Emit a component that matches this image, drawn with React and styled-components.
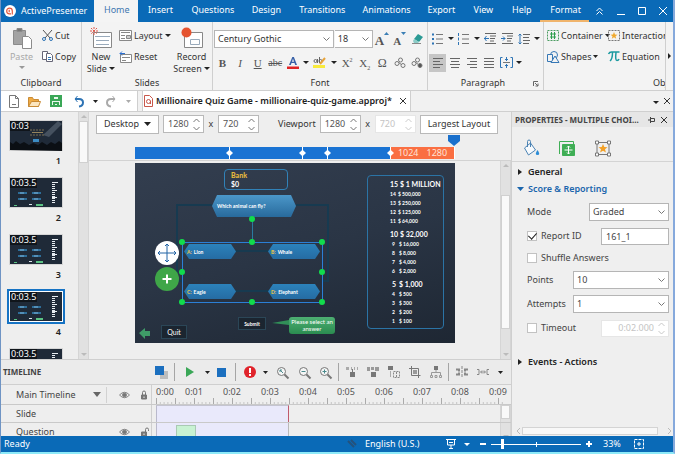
import React, {useState} from 'react';
import styled, {createGlobalStyle, css} from 'styled-components';

const BLUE = '#0a6ab7';
const LINE = '#cfcfcf';

const GlobalStyle = createGlobalStyle`
    *{
        box-sizing: border-box;
    }
    body{
        margin: 0;
        background: #eeeeee;
        color: #333;
        font-family: "Noto Sans", "Open Sans", sans-serif;
        font-size: 9px;
        line-height: 12px;
    }
    button, input, select{
        font: inherit;
        color: inherit;
        margin: 0;
        padding: 0;
        border: 0;
        background: none;
        border-radius: 0;
        min-width: 0;
    }
    ul, ol{
        list-style: none;
        margin: 0;
        padding: 0;
    }
`;

const Window = styled.div`
    display: flex;
    flex-direction: column;
    height: 100vh;
    overflow: hidden;
    background: #eeeeee;
    border-left: 1px solid #6f94c4;
    border-right: 2px solid #86a9dc;
    border-bottom: 2px solid #8eeaf8;
`;

/* title bar */
const TitleBar = styled.header`
    display: flex;
    flex: none;
    height: 22px;
    background: ${BLUE};
    color: #fff;
`;

const Brand = styled.div`
    display: flex;
    align-items: center;
    gap: 5px;
    width: 93px;
    padding-left: 3px;
    white-space: nowrap;
`;

const TabList = styled.nav`
    display: flex;
    flex: 1;
    min-width: 0;
`;

const RibbonTab = styled.button`
    padding: 0 10px;
    white-space: nowrap;
    border-bottom: 2px solid transparent;
    ${p => p.$active && css`
        background: #f4f4f4;
        color: #3f77b0;
    `}
    ${p => p.$context && css`
        border-bottom-color: #f0b46c;
    `}
`;

const WindowButtons = styled.div`
    display: flex;
    flex: none;
    align-items: center;
    button{
        width: 21px;
        height: 22px;
        display: grid;
        place-items: center;
    }
`;

/* ribbon */
const Ribbon = styled.div`
    display: flex;
    flex: none;
    height: 69px;
    background: #f3f3f3;
    border-bottom: 1px solid ${LINE};
`;

const Group = styled.section`
    display: flex;
    flex-direction: column;
    flex: ${p => p.$width ? 'none' : '1'};
    width: ${p => p.$width ? p.$width + 'px' : 'auto'};
    min-width: 0;
    overflow: hidden;
    padding: 3px 1px 0;
    border-right: 1px solid ${LINE};
`;

const GroupBody = styled.div`
    display: flex;
    flex: 1;
    gap: ${p => p.$gap || 0}px;
    padding-left: ${p => p.$pad || 0}px;
`;

const GroupLabel = styled.div`
    display: flex;
    align-items: center;
    height: 14px;
    padding: 0 4px 0 ${p => p.$pad || 4}px;
    white-space: nowrap;
    span{
        flex: 1;
        text-align: ${p => p.$pad ? 'left' : 'center'};
    }
`;

const BigButton = styled.button`
    display: flex;
    flex-direction: column;
    align-items: center;
    padding-top: 2px;
    width: ${p => p.$width}px;
    white-space: nowrap;
    &:disabled{
        color: #a9a9a9;
    }
    > svg:first-child{
        margin-bottom: 2px;
    }
    span svg{
        margin-bottom: 2px;
    }
`;

const Stack = styled.div`
    display: flex;
    flex-direction: column;
    min-width: 0;
`;

const SmallButton = styled.button`
    display: flex;
    align-items: center;
    gap: 2px;
    height: 21px;
    white-space: nowrap;
`;

const Tools = styled.div`
    display: flex;
    align-items: center;
    justify-content: space-between;
    height: 21px;
    margin-top: 3px;
    padding-right: ${p => p.$right || 0}px;
`;

const Tool = styled.button`
    display: grid;
    place-items: center;
    flex: none;
    width: ${p => p.$width || 17}px;
    height: 18px;
    background: ${p => p.$on ? '#c6c6c6' : 'none'};
    font-family: ${p => p.$serif ? '"Liberation Serif", serif' : 'inherit'};
    font-size: ${p => p.$size || 11}px;
    font-weight: ${p => p.$bold ? 700 : 400};
    font-style: ${p => p.$italic ? 'italic' : 'normal'};
    text-decoration: ${p => p.$deco || 'none'};
    color: #555;
    sup, sub{
        font-size: 6px;
        line-height: 0;
    }
`;

const Combo = styled.button`
    display: flex;
    align-items: center;
    justify-content: space-between;
    width: ${p => p.$width}px;
    height: 18px;
    padding: 0 3px;
    background: #fff;
    border: 1px solid #b5b5b5;
    & + &{
        border-left: 0;
    }
`;

const ScrollRibbon = styled.button`
    display: grid;
    place-items: center;
    flex: none;
    width: 7px;
`;

/* quick access + documents */
const DocBar = styled.div`
    display: flex;
    flex: none;
    align-items: stretch;
    height: 21px;
    border-bottom: 1px solid ${LINE};
    background: #f1f1f1;
`;

const QuickAccess = styled.div`
    display: flex;
    align-items: center;
    width: 137px;
    padding-left: 2px;
    background: #fff;
    border-right: 1px solid ${LINE};
`;

const DocTab = styled.div`
    display: flex;
    align-items: center;
    width: 269px;
    margin-left: 4px;
    padding: 0 4px 0 1px;
    gap: 3px;
    background: #fff;
    border: solid ${LINE};
    border-width: 0 1px;
    color: #222;
    font-weight: 600;
    white-space: nowrap;
    span{
        flex: 1;
    }
`;

const DocActions = styled.div`
    display: flex;
    align-items: center;
    gap: 5px;
    margin-left: auto;
    padding-right: 3px;
`;

/* workspace */
const Workspace = styled.div`
    display: grid;
    grid-template-columns: minmax(0, 1fr) 162px;
    flex: 1;
    min-height: 0;
`;

const Editor = styled.div`
    display: flex;
    flex-direction: column;
    min-width: 0;
    min-height: 0;
`;

const EditorTop = styled.div`
    display: flex;
    flex: 1;
    min-height: 0;
    border-bottom: 1px solid ${LINE};
`;

const SlideList = styled.ol`
    flex: none;
    width: 77px;
    overflow: hidden;
    padding: 6px 0 0 6px;
`;

const SlideItem = styled.li`
    width: 58px;
    height: 57px;
    text-align: right;
    color: #222;
    line-height: 16px;
    padding-right: 4px;
    font-weight: 600;
`;

const Thumb = styled.button`
    display: block;
    width: 58px;
    height: 35px;
    padding: 1px;
    border: 2px solid ${p => p.$selected ? '#1673c4' : 'transparent'};
    background: ${p => p.$selected ? '#fff' : '#d6d6d6'};
    background-clip: padding-box;
    position: relative;
    svg{
        display: block;
    }
`;

const Duration = styled.span`
    position: absolute;
    left: 1px;
    top: 1px;
    padding: 0 1px;
    color: #fff;
    background: #10151b;
    font-size: 9px;
    font-weight: 400;
    line-height: 10px;
`;

const VScroll = styled.div`
    display: flex;
    flex-direction: column;
    align-items: center;
    flex: none;
    width: 11px;
    border: solid #d5d5d5;
    border-width: 0 1px;
    background: #e1e1e1;
    color: #b9b9b9;
    i{
        display: block;
        width: 9px;
        height: ${p => p.$thumb};
        background: #f9f9f9;
        border: 1px solid #d0d0d0;
    }
`;

const ScrollArrow = styled.span`
    display: grid;
    place-items: center;
    width: 9px;
    height: ${p => p.$long ? 34 : 9}px;
    align-items: ${p => p.$long ? 'start' : 'center'};
    padding-top: ${p => p.$long ? 3 : 0}px;
    &:last-child{
        margin-top: auto;
    }
`;

const CanvasPane = styled.main`
    display: flex;
    flex-direction: column;
    flex: 1;
    min-width: 0;
`;

const CanvasBar = styled.div`
    display: flex;
    align-items: center;
    height: 24px;
    padding-left: 7px;
    gap: 4px;
    white-space: nowrap;
`;

const BoxButton = styled.button`
    display: flex;
    align-items: center;
    justify-content: space-between;
    width: ${p => p.$width}px;
    height: 19px;
    padding: 0 7px;
    background: #fff;
    border: 1px solid #b9b9b9;
`;

const Spin = styled.span`
    display: flex;
    align-items: center;
    width: ${p => p.$wide ? 68 : 41}px;
    height: ${p => p.$wide ? 17 : 18}px;
    padding: 0 3px 0 4px;
    background: #fff;
    border: 1px solid ${p => p.$off ? '#e6e6e6' : '#b9b9b9'};
    color: ${p => p.$off ? '#c4c4c4' : '#555'};
    input{
        flex: 1;
        width: 100%;
        text-align: ${p => p.$wide ? 'right' : 'left'};
    }
    svg{
        margin-left: 4px;
    }
`;

const Times = styled.span`
    width: 6px;
    text-align: center;
`;

const FieldLabel = styled.label`
    margin-left: 15px;
`;

const Breakpoints = styled.div`
    display: flex;
    align-items: flex-end;
    height: 25px;
    padding: 0 0 1px 46px;
    border-bottom: 1px solid #d2d2d2;
`;

const Segment = styled.div`
    display: flex;
    align-items: center;
    justify-content: center;
    gap: 8px;
    position: relative;
    width: ${p => p.$width}px;
    height: 12px;
    background: ${p => p.$orange ? '#fa6f42' : '#1a73d3'};
    border-right: 1px solid #fff;
    color: #ffe3d6;
`;

const SegmentHandle = styled.span`
    position: absolute;
    z-index: 1;
    right: -4px;
    top: 3px;
    width: 7px;
    height: 6px;
    background: #fff;
    clip-path: polygon(0 50%, 45% 0, 55% 0, 100% 50%, 55% 100%, 45% 100%);
`;

const Playhead = styled.span`
    position: absolute;
    right: -6px;
    top: -12px;
    width: 12px;
    height: 11px;
    background: #1a70cc;
    clip-path: polygon(0 0, 100% 0, 100% 55%, 50% 100%, 0 55%);
`;

const CanvasArea = styled.div`
    display: flex;
    flex: 1;
    min-height: 0;
    justify-content: space-between;
    padding-left: 46px;
`;

/* the slide */
const Stage = styled.div`
    position: relative;
    flex: none;
    width: 320px;
    height: 180px;
    margin-top: 2px;
    background: linear-gradient(165deg, #333e4f 0%, #2a3545 50%, #1e2733 100%);
    color: #fff;
    font-family: Lato, "Open Sans", sans-serif;
    font-size: 5px;
    line-height: 8px;
    white-space: nowrap;
`;

const Placed = styled.div`
    position: absolute;
    left: ${p => p.$x}px;
    top: ${p => p.$y}px;
    width: ${p => p.$w}px;
    height: ${p => p.$h}px;
`;

const Wires = styled.svg`
    position: absolute;
    inset: 0;
    overflow: visible;
`;

const BankBox = styled(Placed)`
    border: 1px solid #3182b8;
    border-radius: 4px;
    padding: 1px 6px;
    font-size: 7px;
    line-height: 9px;
    font-weight: 700;
    b{
        display: block;
        color: #e5b93c;
    }
`;

const Hexagon = styled(Placed)`
    display: flex;
    align-items: center;
    gap: 2px;
    padding-left: ${p => p.$question ? 5 : 3}px;
    background: ${p => p.$question ? 'linear-gradient(#4b97c9, #286a9c)' : 'linear-gradient(#2c82bb, #256ca3)'};
    clip-path: polygon(5px 0, calc(100% - 5px) 0, 100% 50%, calc(100% - 5px) 100%, 5px 100%, 0 50%);
    font-weight: 700;
    b{
        color: #e2c04d;
    }
`;

const SlideButton = styled(Placed)`
    display: grid;
    place-items: center;
    border: 1px solid #2b4657;
    background: #1b2530;
    font-size: ${p => p.$size}px;
    font-weight: ${p => p.$size > 5 ? 400 : 700};
`;

const Balloon = styled(Placed)`
    border-radius: 3px;
    background: linear-gradient(#4daf72, #2b8c50);
    font-size: 6px;
    line-height: 7px;
    padding-top: 1px;
    text-align: center;
`;

const Ladder = styled(Placed).attrs({as: 'ol'})`
    border: 1px solid #2b74a6;
    border-radius: 4px;
`;

const Rung = styled.li`
    display: flex;
    gap: 2px;
    padding-left: ${p => p.$indent ? 24 : 22}px;
    font-weight: 700;
    line-height: 9px;
    ${p => p.$big && css`
        font-size: 7px;
        line-height: 11px;
        padding-top: 3px;
    `}
    span{
        width: ${p => p.$indent ? 5 : p.$big ? 8 : 6}px;
        flex: none;
    }
`;

/* properties */
const Properties = styled.aside`
    display: flex;
    flex-direction: column;
    min-height: 0;
    border-left: 1px solid ${LINE};
    background: #efefef;
`;

const PanelTitle = styled.div`
    display: flex;
    align-items: center;
    height: 15px;
    padding: 0 6px 0 3px;
    gap: 6px;
    background: #e6e6e6;
    color: #444;
    font-size: 8px;
    font-weight: 700;
    white-space: nowrap;
    h2{
        flex: 1;
        margin: 0;
        font: inherit;
        overflow: hidden;
    }
`;

const PanelTabs = styled.div`
    display: flex;
    align-items: flex-end;
    height: 35px;
    padding: 0 0 2px 10px;
    gap: 18px;
    border-bottom: 1px solid #d4d4d4;
    button{
        width: 18px;
        height: 20px;
    }
`;

const Section = styled.button`
    display: flex;
    align-items: center;
    gap: ${p => p.$open ? 4 : 6}px;
    height: 17px;
    padding-left: ${p => p.$open ? 5 : 6}px;
    margin-top: ${p => p.$top || 0}px;
    font-weight: 600;
    color: ${p => p.$open ? '#1b66ad' : '#222'};
`;

const Fields = styled.div`
    display: flex;
    flex-direction: column;
    padding: 3px 4px 0 15px;
`;

const Field = styled.div`
    display: flex;
    align-items: center;
    height: ${p => p.$h || 24}px;
    color: #444;
    white-space: nowrap;
    > label{
        display: flex;
        align-items: center;
        gap: 4px;
        flex: 1;
    }
`;

const Check = styled.input.attrs({type: 'checkbox'})`
    appearance: none;
    display: grid;
    place-items: center;
    width: 10px;
    height: 10px;
    background: #fff;
    border: 1px solid #c2c2c2;
    &:checked::after{
        content: '';
        width: 4px;
        height: 7px;
        margin-top: -2px;
        border: solid #222;
        border-width: 0 1px 1px 0;
        transform: rotate(42deg);
    }
`;

const SelectWrap = styled.span`
    display: flex;
    align-items: center;
    width: ${p => p.$width}px;
    height: 18px;
    padding-right: 3px;
    background: #fff;
    border: 1px solid #b5b5b5;
    select{
        appearance: none;
        flex: 1;
        padding-left: 3px;
        outline: 0;
    }
`;

const TextInput = styled.input`
    width: 68px;
    height: 17px;
    padding-left: 4px;
    background: #fff;
    border: 1px solid #b5b5b5;
`;

const HScroll = styled.div`
    display: flex;
    align-items: center;
    gap: 2px;
    height: 10px;
    margin-top: auto;
    padding: 0 1px 0 4px;
    color: #bbb;
    i{
        flex: 1;
        height: 8px;
        margin-right: 8px;
        background: #f8f8f8;
        border: 1px solid #d4d4d4;
    }
`;

/* timeline */
const Timeline = styled.section`
    flex: none;
    height: 76px;
    overflow: hidden;
`;

const TimelineBar = styled.div`
    display: flex;
    align-items: center;
    height: 25px;
    padding: 0 1px 0 2px;
    border-bottom: 1px solid ${LINE};
    background: #ebebeb;
    h2{
        margin: 0;
        width: 147px;
        font-size: 8px;
        line-height: 12px;
        font-weight: 700;
        color: #444;
    }
`;

const Cell = styled.button`
    display: grid;
    place-items: center;
    flex: none;
    width: ${p => p.$w || 21}px;
    height: 20px;
`;

const Divider = styled.i`
    flex: none;
    width: 1px;
    height: 18px;
    margin: 0 ${p => p.$m ?? 2}px;
    background: #a5a5a5;
`;

const TrackRow = styled.div`
    display: grid;
    grid-template-columns: 151px minmax(0, 1fr) 11px;
    height: ${p => p.$h}px;
    border-bottom: 1px solid #c9c9c9;
`;

const TrackName = styled.div`
    display: flex;
    align-items: center;
    padding: 0 2px 0 15px;
    border-right: 1px solid ${LINE};
    color: #444;
    white-space: nowrap;
    span{
        flex: 1;
    }
`;

const TrackState = styled.div`
    display: flex;
    align-items: center;
    justify-content: space-between;
    width: ${p => p.$split ? 43 : 30}px;
    height: 16px;
    margin-left: 5px;
    padding-left: ${p => p.$split ? 12 : 0}px;
    border-left: ${p => p.$split ? 1 : 0}px solid #d2d2d2;
`;

const Ruler = styled.div`
    overflow: hidden;
    grid-column: 2 / 4;
    color: #555;
    ol{
        display: flex;
        padding-left: 4px;
        width: 400px;
    }
    li{
        flex: none;
        width: 38px;
        text-align: center;
        line-height: 13px;
    }
    li:first-child{
        width: 19px;
        text-align: left;
    }
    svg{
        display: block;
    }
`;

const Lane = styled.div`
    display: flex;
    padding-left: 4px;
`;

const Clip = styled.div`
    width: 133px;
    padding-left: ${p => p.$inset ? 19 : 0}px;
    background: #e9e9fb;
    border-left: 1px solid #b9b9cc;
    border-right: 1px solid ${p => p.$inset ? '#b9b9b9' : '#c05a6c'};
    border-top: ${p => p.$inset ? 0 : 1}px solid #c4c4d0;
    i{
        display: block;
        width: 20px;
        height: 100%;
        margin-top: 2px;
        background: #c8f2d3;
        border: 1px solid #a9c9b4;
    }
`;

/* status bar */
const StatusBar = styled.footer`
    display: flex;
    align-items: center;
    flex: none;
    height: 16px;
    padding: 0 26px 0 3px;
    background: ${BLUE};
    color: #fff;
    white-space: nowrap;
    button{
        display: grid;
        place-items: center;
        width: 16px;
        height: 16px;
    }
`;

const StatusText = styled.span`
    width: ${p => p.$width ? p.$width + 'px' : 'auto'};
    flex: ${p => p.$width ? 'none' : '1'};
    padding-left: ${p => p.$pad || 0}px;
`;

const Zoom = styled.input.attrs({type: 'range'})`
    appearance: none;
    width: 90px;
    height: 12px;
    background: linear-gradient(#fff, #fff) 45px 50% / 1px 5px no-repeat, linear-gradient(#fff, #fff) 0 50% / 100% 1px no-repeat;
    &::-webkit-slider-thumb{
        appearance: none;
        width: 3px;
        height: 10px;
        background: #fff;
    }
`;

const Svg = styled.svg`
    flex: none;
    overflow: visible;
`;

function Icon({w = 12, h = 12, stroke = '#5a6470', sw = 1, children}){
    return (
        <Svg width={w} height={h} viewBox={`0 0 ${w} ${h}`} fill="none" stroke={stroke} strokeWidth={sw} aria-hidden="true">
            {children}
        </Svg>
    )
}

function Caret({color = '#222', w = 6, h = 3, up}){
    return <Icon w={w} h={h} stroke="none"><path fill={color} d={up ? `M0 ${h}H${w}L${w / 2} 0z` : `M0 0H${w}L${w / 2} ${h}z`} /></Icon>
}

function Chevron(){
    return <Icon w={7} h={4} stroke="#777"><path d="M.5 .5l3 3 3-3" /></Icon>
}

function Arrows({color = '#777'}){
    return <Icon w={7} h={13} stroke={color}><path d="M.5 4l3-3 3 3M.5 9l3 3 3-3" /></Icon>
}

function Cross({size = 7, color = '#333'}){
    return <Icon w={size} h={size} stroke={color}><path d={`M0 0l${size} ${size}M${size} 0L0 ${size}`} /></Icon>
}

function Lines({short}){
    const paths = {
        left: 'M0 .5h10M0 3.5h7M0 6.5h10M0 9.5h7',
        center: 'M0 .5h10M1 3.5h8M0 6.5h10M1 9.5h8',
        right: 'M0 .5h10M3 3.5h7M0 6.5h10M3 9.5h7'
    };
    return <Icon w={10} h={10} stroke="#666"><path d={paths[short] || 'M0 .5h10M0 3.5h10M0 6.5h10M0 9.5h10'} /></Icon>
}

function Magnifier({sign}){
    return (
        <Icon w={13} h={13} stroke="#777">
            <circle cx="5.5" cy="5.5" r="4" fill="#f5f5f5" />
            <path d="M8.5 8.5l4 4" strokeWidth="2" />
            <path stroke="#498a8c" d={sign} />
        </Icon>
    )
}

function Eye(){
    return <Icon w={11} h={8} stroke="#888"><path d="M.5 4Q5.5-1.5 10.5 4Q5.5 9.5 .5 4z" /><circle cx="5.5" cy="4" r="2" fill="#777" /></Icon>
}

function Lock({open}){
    return (
        <Icon w={9} h={10} stroke="#777">
            <path fill="#777" d="M1.5 5h5v4h-5z" />
            <path d={open ? 'M5.5 5V2.5a1.5 1.5 0 013 0v1.5' : 'M2.5 5V2.5a1.5 1.5 0 013 0V5'} />
            <path stroke="#eee" d="M4 6.5v1.5" />
        </Icon>
    )
}

function Logo({size = 12}){
    return (
        <Svg width={size} height={size} viewBox="0 0 12 12" fill="none" aria-hidden="true">
            <circle cx="6" cy="6" r="6" fill="#fff" />
            <path stroke="#e4573c" strokeWidth="1.2" d="M7 8.8H5.5a2.8 2.8 0 112.8-2.8v3.5M5.2 4.8v2.4" />
        </Svg>
    )
}

function FontScale({down}){
    return (
        <Icon w={5} h={14} stroke="none">
            <path fill="#3b7fb5" d={down ? 'M0 1h5L2.5 4z' : 'M0 4h5L2.5 1z'} />
        </Icon>
    )
}

function ListIcon({numbered}){
    return (
        <Icon w={11} h={12} stroke="#777">
            <path d="M4 1.5h7M4 6h7M4 10.5h7" />
            <path stroke="#2e74b5" strokeWidth={numbered ? 1 : 2} d={numbered ? 'M.5 0v3M.5 4.5v3M.5 9v3' : 'M0 1.5h2M0 6h2M0 10.5h2'} />
        </Icon>
    )
}

function IndentIcon({right}){
    return (
        <Icon w={12} h={11} stroke="#666">
            <path d="M1 .5h11M6 3h6M6 5.5h5M6 8h4M1 10.5h11" />
            <path stroke="#2e74b5" d={right ? 'M0 5.5h4M2 3.5l2 2-2 2' : 'M0 5.5h5M2.5 3l-2 2.5 2 2.5'} />
        </Icon>
    )
}

function LinkIcon({broken}){
    return (
        <Icon w={12} h={11} stroke="#777">
            <circle cx="3" cy="6.5" r="2" /><circle cx="6.5" cy="3" r="2" />
            <circle cx="9" cy="8.5" r="2" fill={broken ? '#555' : 'none'} /><path d="M4.5 5.5l3 2" />
        </Icon>
    )
}

function FrameGrid({color, children}){
    return (
        <Icon w={12} h={13} stroke={color}>
            <path strokeDasharray="2 1" d="M.5 1.5h11v10H.5z" />
            {children}
        </Icon>
    )
}

function TrackIcon({kind}){
    const shapes = {
        shift: <><path fill="#aaa" d="M0 1h3v3H0zM5 1h1v3H5zM8 1h1v3H8zM11 1h1v3h-1z" /><path fill="#777" d="M4 6h5v5H4zM6 3h1v3H6z" /></>,
        pack: <><path fill="#999" d="M0 1h3v4H0zM4 1h3v3H4zM8 1h4v4H8z" /><path fill="#777" d="M4 6h5v5H4z" /></>,
        dup: <><path fill="#777" d="M0 0h5v4H0z" /><path fill="#aaa" d="M2 5h1v6H2z" /><path stroke="#888" strokeDasharray="2 1" d="M5.5 5.5h6v6h-6zM8.5 6v5" /></>,
        crop: <><path stroke="#777" d="M2.5 0v9.5h9M0 2.5h9.5V12" /><path fill="#999" d="M4 4h4v4H4z" /></>,
        tree: <><path fill="#777" d="M4 0h4v4H4z" /><path stroke="#999" d="M6 4v3M1.5 9V6.5h9V9M.5 9.5h2v2h-2zM5 9.5h2v2H5zM9.5 9.5h2v2h-2z" /></>,
        split: <><path stroke="#888" d="M6 0v12" strokeDasharray="3 1" /><path stroke="#888" strokeWidth="2" d="M0 3.5h3v2M0 8.5h3v-2M12 3.5H9v2M12 8.5H9v-2" /></>,
        join: <path stroke="#888" d="M0 3.5h2v5H0M12 3.5h-2v5h2M4 6h4M5 4.5L3.5 6 5 7.5M7 4.5L8.5 6 7 7.5" />
    };
    return <Icon stroke="none">{shapes[kind]}</Icon>
}

function ThumbArt({intro}){
    return (
        <Svg width="52" height="29" viewBox="0 0 52 29" aria-hidden="true">
            <rect width="52" height="29" fill="#1f2a38" />
            {
                intro ?
                <>
                    <path fill="#556371" opacity=".7" d="M48 0L33 14l6 2L52 3z" />
                    <path d="M20 9h15M20 14h15" stroke="#7a6d51" strokeDasharray="2 1" />
                    <path d="M22 11.5h11" stroke="#95845d" />
                    <path fill="#3c8cc4" d="M23 18h6v3h-6z" />
                    <path fill="#0b0f14" d="M0 29v-8l3 2 3-3 4 3 4-2 5 3 4-2 5 2 4-3 5 3 4-3 4 2 4-3 3 2v8z" />
                </>
                :
                <>
                    <path stroke="#2e6d98" strokeWidth="2" d="M8 15h9M22 15h9M8 21h9M22 21h9" />
                    <path stroke="#7ab3d8" d="M10 15h4M24 15h4M10 21h4M24 21h4" />
                    <path stroke="#e8edf2" strokeWidth="3" strokeDasharray="1 1" d="M43.5 4v22" />
                    <path stroke="#e8edf2" d="M42 4.5h6M42 12.5h5M42 19.5h5" />
                    <path fill="#5bc283" d="M26 26h7v2h-7zM4 27h3v1H4z" />
                    <path fill="#dce3ea" d="M19 26h3v1h-3z" />
                </>
            }
        </Svg>
    )
}

const tabs = ['Home', 'Insert', 'Questions', 'Design', 'Transitions', 'Animations', 'Export', 'View', 'Help', 'Format'];

const slides = [
    {id: 's1', label: '1', time: '0:03'},
    {id: 's2', label: '2', time: '0:03.5'},
    {id: 's3', label: '3', time: '0:03.5'},
    {id: 's4', label: '4', time: '0:03.5'},
    {id: 's5', time: '0:03.5'}
];

const ladder = [
    [15, '$ 1 MILLION'], [14, '$ 500,000'], [13, '$ 250,000'], [12, '$ 125,000'], [11, '$ 64,000'],
    [10, '$ 32,000'], [9, '$ 16,000'], [8, '$ 8,000'], [7, '$ 4,000'], [6, '$ 2,000'],
    [5, '$ 1,000'], [4, '$ 500'], [3, '$ 300'], [2, '$ 200'], [1, '$ 100']
];

const answers = [
    {key: 'A:', text: 'Lion', x: 49, y: 81},
    {key: 'B:', text: 'Whale', x: 133, y: 81},
    {key: 'C:', text: 'Eagle', x: 49, y: 121},
    {key: 'D:', text: 'Elephant', x: 133, y: 121}
];

const handles = [[47, 79], [117, 79], [187, 79], [47, 109], [187, 109], [47, 139], [117, 139], [187, 139], [117, 56]];

function HomeRibbon(){
    return (
        <Ribbon>
            <Group $width={81}>
                <GroupBody $pad={2} $gap={3}>
                    <BigButton $width={35} disabled>
                        <Icon w={20} h={22} stroke="#8b8b8b">
                            <path fill="#a3a3a3" d="M1.5 3.5h12v14h-12z" /><path fill="#777" d="M5 1.5h5v3H5z" />
                            <path fill="#fff" d="M10.5 9.5h6l3 3v9h-9z" />
                        </Icon>
                        <span>Paste</span>
                        <Icon w={6} h={6} stroke="none"><path fill="#999" d="M0 3h6L3 6z" /></Icon>
                    </BigButton>
                    <Stack>
                        <SmallButton>
                            <Icon w={11} h={11} stroke="#555">
                                <path d="M1 0l7 8M10 0L3 8" /><circle cx="2" cy="9" r="1.5" stroke="#2e74b5" /><circle cx="9" cy="9" r="1.5" stroke="#2e74b5" />
                            </Icon>
                            Cut
                        </SmallButton>
                        <SmallButton>
                            <Icon w={11} h={11} stroke="#667">
                                <path fill="#fff" d="M.5 .5h5v8h-5z" /><path fill="#fff" d="M4.5 2.5h4l2 2v6h-6z" /><path stroke="#2e74b5" d="M6 6.5h3M6 8.5h3" />
                            </Icon>
                            Copy
                        </SmallButton>
                    </Stack>
                </GroupBody>
                <GroupLabel><span>Clipboard</span></GroupLabel>
            </Group>
            <Group $width={131}>
                <GroupBody $pad={2} $gap={2}>
                    <BigButton $width={32}>
                        <Icon w={22} h={22} stroke="#888">
                            <path fill="#fff" d="M3.5 5.5h18v15h-18z" /><path stroke="#9ab" d="M5 9.5h15M6 13.5h13M6 17.5h13" />
                            <path stroke="#e0584a" strokeDasharray="2 1" d="M4 0v8M0 4h8M1 1l6 6M7 1L1 7" />
                        </Icon>
                        <span>New</span>
                        <span>Slide <Caret /></span>
                    </BigButton>
                    <Stack>
                        <SmallButton>
                            <Icon w={13} h={11} stroke="#888">
                                <path fill="#fff" d="M.5 .5h12v10H.5z" /><path d="M2 2.5h9M2 5.5h4M2 8.5h4" /><path fill="#ccc" d="M7.5 5.5h4v3h-4z" />
                            </Icon>
                            Layout <Caret />
                        </SmallButton>
                        <SmallButton>
                            <Icon w={13} h={12} stroke="#888">
                                <path fill="#fff" d="M1.5 3.5h11v8h-11z" /><path d="M3 6.5h8M3 9.5h4" /><path stroke="#2b6fd0" d="M1 2.5h5M3 .5l-2 2 2 2" />
                            </Icon>
                            Reset
                        </SmallButton>
                    </Stack>
                    <BigButton $width={38}>
                        <Icon w={22} h={22} stroke="#888">
                            <path fill="#fff" d="M3.5 5.5h18v15h-18z" /><path stroke="#9ab" d="M9.5 12.5h9v5h-9z" />
                            <circle cx="5.5" cy="5.5" r="5" fill="#e5532f" stroke="none" />
                        </Icon>
                        <span>Record</span>
                        <span>Screen <Caret /></span>
                    </BigButton>
                </GroupBody>
                <GroupLabel><span>Slides</span></GroupLabel>
            </Group>
            <Group $width={215}>
                <Tools>
                    <Combo $width={120} aria-label="Font"><span>Century Gothic</span><Chevron /></Combo>
                    <Combo $width={38} aria-label="Font size"><span>18</span><Chevron /></Combo>
                    <Tool $serif $bold $size={13}><span>A<FontScale /></span></Tool>
                    <Tool $serif $bold $size={11}><span>A<FontScale down /></span></Tool>
                    <Tool aria-label="Clear formatting">
                        <Icon w={11} h={11} stroke="none">
                            <path fill="#2b9a94" d="M6 1l5 3-4 5-5-3z" /><path fill="#8cccc7" d="M2 6l5 3-1 1H2L1 8z" /><path fill="#888" d="M0 10h9v1H0z" />
                        </Icon>
                    </Tool>
                </Tools>
                <Tools>
                    <Tool $serif $bold>B</Tool>
                    <Tool $serif $italic>I</Tool>
                    <Tool $serif $deco="underline">U</Tool>
                    <Tool $serif $deco="line-through" $size={10}>abc</Tool>
                    <Tool aria-label="Font color">
                        <Icon w={12} h={12} stroke="none">
                            <path fill="#3a62a8" fillRule="evenodd" d="M5.3 0h1.6L10 8H8.2L7.5 6h-3L3.8 8H2zM6 1.8L5 4.8h2z" /><path fill="#e02424" d="M0 9.5h12v2.5H0z" />
                        </Icon>
                    </Tool>
                    <Tool $width={9}><Caret /></Tool>
                    <Tool aria-label="Highlight">
                        <Icon w={13} h={13} stroke="#666">
                            <circle cx="2.5" cy="5" r="1.5" /><path d="M4.5 3v4M6.5 1v6" /><circle cx="7.5" cy="5" r="1.5" />
                            <path stroke="#e7a33a" strokeWidth="2" d="M12 2L7 8" /><path stroke="#f8ea3b" strokeWidth="3" d="M0 10.5h12" />
                        </Icon>
                    </Tool>
                    <Tool $width={9}><Caret /></Tool>
                    <Tool $serif><span>X<sup>2</sup></span></Tool>
                    <Tool $serif><span>X<sub>2</sub></span></Tool>
                    <Tool $serif $size={12}>Ω</Tool>
                    <Tool aria-label="Link"><LinkIcon /></Tool>
                    <Tool aria-label="Remove link"><LinkIcon broken /></Tool>
                </Tools>
                <GroupBody />
                <GroupLabel><span>Font</span></GroupLabel>
            </Group>
            <Group $width={116}>
                <Tools>
                    <Tool aria-label="Bullets"><ListIcon /></Tool>
                    <Tool $width={9}><Caret /></Tool>
                    <Tool aria-label="Numbering"><ListIcon numbered /></Tool>
                    <Tool $width={9}><Caret /></Tool>
                    <Tool aria-label="Decrease indent"><IndentIcon /></Tool>
                    <Tool aria-label="Increase indent"><IndentIcon right /></Tool>
                    <Tool aria-label="Line spacing">
                        <Icon w={12} h={12} stroke="#666">
                            <path d="M5 1.5h7M5 4.5h6M5 7.5h7M5 10.5h6" /><path stroke="#2e74b5" d="M2 1v10M.5 2.5L2 1l1.5 1.5M.5 9.5L2 11l1.5-1.5" />
                        </Icon>
                    </Tool>
                    <Tool $width={9}><Caret /></Tool>
                </Tools>
                <Tools $right={18}>
                    <Tool $on aria-label="Align left"><Lines short="left" /></Tool>
                    <Tool aria-label="Center"><Lines short="center" /></Tool>
                    <Tool aria-label="Align right"><Lines short="right" /></Tool>
                    <Tool aria-label="Justify"><Lines /></Tool>
                    <Tool aria-label="Align text">
                        <Icon w={13} h={11} stroke="#2e74b5">
                            <path d="M2.5 .5h-2v10h2M10.5 .5h2v10h-2M6.5 0v4M6.5 7v4M5 2.5h3M5 8.5h3" /><path stroke="#777" d="M3 5.5h7" />
                        </Icon>
                    </Tool>
                    <Tool $width={9}><Caret /></Tool>
                </Tools>
                <GroupBody />
                <GroupLabel>
                    <span>Paragraph</span>
                    <Icon w={5} h={5} stroke="#666"><path d="M.5 5V.5H5M2 2l3 3M5 2.5V5H2.5" /></Icon>
                </GroupLabel>
            </Group>
            <Group>
                <GroupBody $pad={2} $gap={3}>
                    <Stack>
                        <SmallButton>
                            <FrameGrid color="#4d9d62"><path stroke="#2f9e4d" d="M4.5 3v7M7.5 3v7M3 5h6M3 8h6" /></FrameGrid>
                            Container <Caret w={5} />
                        </SmallButton>
                        <SmallButton>
                            <Icon w={12} h={12} stroke="#3577b5">
                                <circle cx="7" cy="4" r="3.5" /><path fill="#f3f3f3" d="M.5 3.5h5v7h-5z" /><path fill="#f3f3f3" d="M8 5l4 6.5H4z" />
                            </Icon>
                            Shapes <Caret w={5} />
                        </SmallButton>
                    </Stack>
                    <Stack>
                        <SmallButton>
                            <FrameGrid color="#777"><path fill="#f0a92e" stroke="none" d="M6 3l1 2.500 2.500.2-2 1.500.7 2.500L6 8.300 3.800 9.700l.7-2.500-2-1.500L5 5.500z" /></FrameGrid>
                            Interaction
                        </SmallButton>
                        <SmallButton>
                            <Icon w={12} h={11} stroke="#1b9aa0" sw={1.5}><path d="M.5 3Q1.5 1 3.5 1H11.5M4.5 1.5Q4.5 8 2 10M8 1.5Q7 9.500 9 9.500 10.500 9.500 11 8" /></Icon>
                            Equation
                        </SmallButton>
                    </Stack>
                </GroupBody>
                <GroupLabel $pad={108}><span>Objects</span></GroupLabel>
            </Group>
            <ScrollRibbon aria-label="Scroll ribbon"><Icon w={3} h={6} stroke="none"><path fill="#222" d="M0 0v6l3-3z" /></Icon></ScrollRibbon>
        </Ribbon>
    )
}

function SlideCanvas(){
    return (
        <Stage>
            <BankBox $x={89} $y={6} $w={64} $h={21}><b>Bank</b>$0</BankBox>
            <Wires width="320" height="180" fill="none">
                <path stroke="#173a50" strokeWidth="2" d="M77 42H42v76h5M161 42h32v76h-6M100 88h34M100 128h34" />
            </Wires>
            <Hexagon $question $x={77} $y={32} $w={84} $h={22}>Which animal can fly?</Hexagon>
            {answers.map(a => (
                <Hexagon key={a.key} $x={a.x} $y={a.y} $w={52} $h={15}><b>{a.key}</b>{a.text}</Hexagon>
            ))}
            <Wires width="320" height="180" fill="none">
                <path stroke="#2b7fd6" d="M47.5 79.5h140v60h-140z" />
                <path stroke="#2a7aa0" d="M117.5 56v23" />
                {handles.map(([x, y]) => <circle key={x + '-' + y} cx={x} cy={y} r="3" fill="#12dc4c" />)}
                <circle cx="32" cy="90" r="12" fill="#fff" />
                <path stroke="#2364a5" d="M32 81v18M23 90h18M30 83l2-2 2 2M30 97l2 2 2-2M25 88l-2 2 2 2M39 88l2 2-2 2" />
                <circle cx="32" cy="116" r="12" fill="#3fa648" />
                <path stroke="#fff" strokeWidth="2" d="M32 111.5v9M27.5 116h9" />
                <path fill="#3f9c68" d="M4 170l6-5v3h5v5h-5v3z" />
                <path fill="#318f58" d="M137 160l17-3v5z" />
            </Wires>
            <SlideButton $size={7} $x={26} $y={162} $w={26} $h={14}>Quit</SlideButton>
            <SlideButton $size={5} $x={103} $y={154} $w={28} $h={13}>Submit</SlideButton>
            <Balloon $x={154} $y={154} $w={46} $h={17}>Please select an<br />answer</Balloon>
            <Ladder $x={232} $y={12} $w={77} $h={154}>
                {ladder.map(([n, prize]) => (
                    <Rung key={n} $big={n % 5 === 0} $indent={n < 10}><span>{n}</span>{prize}</Rung>
                ))}
            </Ladder>
        </Stage>
    )
}

function PropertiesPanel(){
    const [reportId, setReportId] = useState('161_1');
    const [checks, setChecks] = useState({report: true, shuffle: false, timeout: false});

    function toggle(name){
        setChecks({...checks, [name]: !checks[name]});
    }

    return (
        <Properties>
            <PanelTitle>
                <h2>PROPERTIES - MULTIPLE CHOI...</h2>
                <Icon w={7} h={6} stroke="#444"><path d="M0 3h2M2.5 0v6M2.5 1.5h4v3h-4" /></Icon>
                <Cross size={6} />
            </PanelTitle>
            <PanelTabs>
                <button aria-label="Style">
                    <Icon w={18} h={18} stroke="#4b83b4">
                        <path fill="#f7fafd" d="M2.5 9l6-5 5 7-7 5z" /><path d="M5.5 8V2.5a1.5 1.5 0 013 0V8" /><path fill="#2b8cd6" stroke="none" d="M15.5 11q3.500 5 0 5t0-5z" />
                    </Icon>
                </button>
                <button aria-label="Size">
                    <Icon w={18} h={18} stroke="#3fae55">
                        <path d="M1.5 15V2.5h14v3" /><path fill="#3fae55" d="M4.5 5.5h12v11h-12z" />
                        <path stroke="#fff" d="M10.5 7v8M6.5 11h8M9 8.5L10.5 7 12 8.5M9 13.5l1.5 1.5 1.5-1.5" />
                    </Icon>
                </button>
                <button aria-label="Interactivity">
                    <Icon w={18} h={18} stroke="#777">
                        <path d="M3 3.5h12v12H3z" /><path fill="#fff" d="M1.5 2h3v3h-3zM13.5 2h3v3h-3zM1.5 14h3v3h-3zM13.5 14h3v3h-3z" />
                        <path fill="#f2a026" stroke="none" d="M9 5l1.300 3 3.200.2-2.500 2 .9 3.200L9 11.700l-2.900 1.700.9-3.200-2.500-2L7.700 8z" />
                    </Icon>
                </button>
            </PanelTabs>
            <Section $top={1}><Icon w={4} h={6} stroke="none"><path fill="#222" d="M0 0v6l4-3z" /></Icon>General</Section>
            <Section $open><Caret w={7} h={4} color="#1b66ad" />Score &amp; Reporting</Section>
            <Fields>
                <Field>
                    <label htmlFor="mode">Mode</label>
                    <SelectWrap $width={80}><select id="mode"><option>Graded</option></select><Chevron /></SelectWrap>
                </Field>
                <Field>
                    <label><Check checked={checks.report} onChange={() => toggle('report')} />Report ID</label>
                    <TextInput aria-label="Report ID value" value={reportId} onChange={e => setReportId(e.target.value)} />
                </Field>
                <Field $h={20}>
                    <label><Check checked={checks.shuffle} onChange={() => toggle('shuffle')} />Shuffle Answers</label>
                </Field>
                <Field>
                    <label htmlFor="points">Points</label>
                    <SelectWrap $width={96}><select id="points"><option>10</option></select><Chevron /></SelectWrap>
                </Field>
                <Field>
                    <label htmlFor="attempts">Attempts</label>
                    <SelectWrap $width={96}><select id="attempts"><option>1</option></select><Chevron /></SelectWrap>
                </Field>
                <Field>
                    <label><Check checked={checks.timeout} onChange={() => toggle('timeout')} />Timeout</label>
                    <Spin $wide $off><input aria-label="Timeout value" defaultValue="0:02.000" disabled /><Arrows color="#c9c9c9" /></Spin>
                </Field>
            </Fields>
            <Section $top={13}><Icon w={4} h={6} stroke="none"><path fill="#222" d="M0 0v6l4-3z" /></Icon>Events - Actions</Section>
            <HScroll><Icon w={4} h={6} stroke="#bbb"><path d="M4 0L1 3l3 3" /></Icon><i /><Icon w={4} h={6} stroke="#bbb"><path d="M0 0l3 3-3 3" /></Icon></HScroll>
        </Properties>
    )
}

function TimelinePanel(){
    const ticks = Array.from({length: 92}, (_, i) => i);

    return (
        <Timeline>
            <TimelineBar>
                <h2>TIMELINE</h2>
                <Cell $w={22} aria-label="Layers"><Icon stroke="none"><path fill="#bdbdbd" d="M5 5h8v8H5z" /><path fill="#1b6fbf" d="M0 0h9v9H0z" /></Icon></Cell>
                <Divider />
                <Cell $w={26} aria-label="Play"><Icon w={8} h={10} stroke="none"><path fill="#3aa757" d="M0 0v10l8-5z" /></Icon></Cell>
                <Cell $w={8}><Caret w={5} /></Cell>
                <Cell aria-label="Stop"><Icon w={9} h={9} stroke="none"><path fill="#1b6fbf" d="M0 0h9v9H0z" /></Icon></Cell>
                <Divider $m={3} />
                <Cell aria-label="Record"><Icon stroke="none"><circle cx="6" cy="6" r="6" fill="#e0242c" /><path fill="#fff" d="M5 2h2v5H5zM5 8h2v2H5z" /></Icon></Cell>
                <Cell $w={10}><Caret w={5} /></Cell>
                <Cell $w={24} aria-label="Fit zoom"><Magnifier sign="M4 4l3 3M4 6V4h2" /></Cell>
                <Cell aria-label="Zoom out"><Magnifier sign="M3.5 5.5h4" /></Cell>
                <Cell aria-label="Zoom in"><Magnifier sign="M3.5 5.5h4M5.5 3.5v4" /></Cell>
                <Divider />
                {['shift', 'pack', 'dup', 'crop', 'tree'].map(kind => (
                    <Cell key={kind} aria-label={kind}><TrackIcon kind={kind} /></Cell>
                ))}
                <Divider $m={2} />
                <Cell aria-label="Split"><TrackIcon kind="split" /></Cell>
                <Cell aria-label="Join"><TrackIcon kind="join" /></Cell>
                <Cell $w={14}><Caret w={5} /></Cell>
            </TimelineBar>
            <TrackRow $h={20}>
                <TrackName>
                    <span>Main Timeline</span>
                    <Caret w={8} h={5} color="#666" />
                    <TrackState $split><Eye /><Lock /></TrackState>
                </TrackName>
                <Ruler>
                    <ol>{[0, 1, 2, 3, 4, 5, 6, 7, 8, 9].map(n => <li key={n}>0:0{n}</li>)}</ol>
                    <svg width="360" height="7" stroke="#aaa">
                        {ticks.map(i => <line key={i} x1={4.5 + i * 3.8} x2={4.5 + i * 3.8} y1={i % 5 ? 4 : 0} y2="7" strokeOpacity={i % 5 ? .6 : 1} />)}
                    </svg>
                </Ruler>
            </TrackRow>
            <TrackRow $h={18}>
                <TrackName><span>Slide</span></TrackName>
                <Lane><Clip /></Lane>
                <VScroll $thumb="14px"><i /></VScroll>
            </TrackRow>
            <TrackRow $h={19}>
                <TrackName><span>Question</span><TrackState><Eye /><Lock open /></TrackState></TrackName>
                <Lane><Clip $inset><i /></Clip></Lane>
                <VScroll $thumb="8px"><ScrollArrow><Caret color="#bbb" /></ScrollArrow></VScroll>
            </TrackRow>
        </Timeline>
    )
}

export default function App(){
    const [selected, setSelected] = useState('s4');
    const [zoom, setZoom] = useState(11);

    return (
        <>
            <GlobalStyle />
            <Window>
                <TitleBar>
                    <Brand><Logo />ActivePresenter</Brand>
                    <TabList>
                        {tabs.map(name => (
                            <RibbonTab key={name} $active={name === 'Home'} $context={name === 'Format'}>{name}</RibbonTab>
                        ))}
                    </TabList>
                    <WindowButtons>
                        <button aria-label="Collapse ribbon"><Icon w={7} h={8} stroke="#fff"><path d="M.5 4l3-3 3 3M.5 7.5l3-3 3 3" /></Icon></button>
                        <button aria-label="Minimize"><Icon w={8} h={8} stroke="#fff"><path d="M0 7.5h8" /></Icon></button>
                        <button aria-label="Maximize"><Icon w={8} h={8} stroke="#fff"><path d="M.5 .5h7v7h-7z" /></Icon></button>
                        <button aria-label="Close"><Cross size={8} color="#fff" /></button>
                    </WindowButtons>
                </TitleBar>
                <HomeRibbon />
                <DocBar>
                    <QuickAccess>
                        <Cell aria-label="New"><Icon w={10} h={13} stroke="#777"><path fill="#fff" d="M.5 .5h6l3 3v9h-9z" /><path d="M6.5 .5v3h3M3 9.5h4" /></Icon></Cell>
                        <Cell aria-label="Open"><Icon w={13} h={12} stroke="#c98b35"><path fill="#f0ab42" d="M.5 11.5v-9h4l1 2h5v7z" /><path fill="#fce6bf" d="M.5 11.5l3-5h9l-2 5z" /></Icon></Cell>
                        <Cell aria-label="Save"><Icon w={12} h={12} stroke="#3aa757" sw={2}><path fill="#e9f7ec" d="M1 1h10v10H1z" /><path d="M3 1v4h6V1M4 11V8h4v3" /></Icon></Cell>
                        <Cell $w={26} aria-label="Undo"><Icon w={10} h={12} stroke="#2e74b5" sw={2}><path d="M1 4h4q4 0 4 3.5T5 11.5" /><path d="M3.5 1L1 4l2.500 3" strokeWidth="1" /></Icon></Cell>
                        <Cell $w={6}><Caret w={5} /></Cell>
                        <Cell $w={26} aria-label="Redo"><Icon w={10} h={12} stroke="#aaa" sw={2}><path d="M9 4H5Q1 4 1 7.5T5 11.5" /><path d="M6.5 1L9 4 6.5 7" strokeWidth="1" /></Icon></Cell>
                        <Cell $w={8}><Caret color="#aaa" w={5} /></Cell>
                    </QuickAccess>
                    <DocTab>
                        <Icon w={9} h={12} stroke="#c9574a"><path fill="#fff" d="M.5 .5h5l3 3v8h-8z" /><circle cx="4.5" cy="6.5" r="2" /><path d="M6.5 6v3" /></Icon>
                        <span>Millionaire Quiz Game - millionaire-quiz-game.approj*</span>
                        <button aria-label="Close document"><Cross size={6} /></button>
                    </DocTab>
                    <DocActions>
                        <button aria-label="Documents"><Caret /></button>
                        <button aria-label="Close all"><Cross size={6} /></button>
                    </DocActions>
                </DocBar>
                <Workspace>
                    <Editor>
                        <EditorTop>
                            <SlideList>
                                {slides.map(s => (
                                    <SlideItem key={s.id}>
                                        <Thumb $selected={s.id === selected} onClick={() => setSelected(s.id)}>
                                            <ThumbArt intro={s.id === 's1'} />
                                            <Duration>{s.time}</Duration>
                                        </Thumb>
                                        {s.label}
                                    </SlideItem>
                                ))}
                            </SlideList>
                            <VScroll $thumb="42px"><ScrollArrow><Caret up color="#bbb" /></ScrollArrow><i /><ScrollArrow><Caret color="#bbb" /></ScrollArrow></VScroll>
                            <CanvasPane>
                                <CanvasBar>
                                    <BoxButton $width={63}>Desktop <Caret w={7} h={4} /></BoxButton>
                                    <Spin><input aria-label="Layout width" defaultValue="1280" /><Arrows /></Spin>
                                    <Times>x</Times>
                                    <Spin><input aria-label="Layout height" defaultValue="720" /><Arrows /></Spin>
                                    <FieldLabel htmlFor="viewport">Viewport</FieldLabel>
                                    <Spin><input id="viewport" defaultValue="1280" /><Arrows /></Spin>
                                    <Times>x</Times>
                                    <Spin $off><input aria-label="Viewport height" defaultValue="720" disabled /><Arrows color="#ccc" /></Spin>
                                    <BoxButton $width={78}>Largest Layout</BoxButton>
                                </CanvasBar>
                                <Breakpoints>
                                    <Segment $width={95}><SegmentHandle /></Segment>
                                    <Segment $width={73}><SegmentHandle /></Segment>
                                    <Segment $width={25}><SegmentHandle /></Segment>
                                    <Segment $width={63}><SegmentHandle /></Segment>
                                    <Segment $orange $width={64}><span>1024</span><span>1280</span><Playhead /></Segment>
                                </Breakpoints>
                                <CanvasArea>
                                    <SlideCanvas />
                                    <VScroll $thumb="134px"><ScrollArrow $long><Caret up color="#bbb" /></ScrollArrow><i /><ScrollArrow><Caret color="#bbb" /></ScrollArrow></VScroll>
                                </CanvasArea>
                            </CanvasPane>
                        </EditorTop>
                        <TimelinePanel />
                    </Editor>
                    <PropertiesPanel />
                </Workspace>
                <StatusBar>
                    <StatusText>Ready</StatusText>
                    <Icon w={18} h={10} stroke="#24527c" sw={2}><path d="M1 2l6 6M4 1l5 5" /></Icon>
                    <StatusText $width={78}>English (U.S.)</StatusText>
                    <button aria-label="Slide show"><Icon w={10} h={10} stroke="#fff"><path d="M0 .5h10M1.5 1v5h7V1M5 6v3M3 9.5h4M3 3.5h4" /></Icon></button>
                    <button aria-label="View options"><Caret color="#fff" /></button>
                    <button aria-label="Zoom out"><Icon w={6} h={2} stroke="none"><path fill="#fff" d="M0 0h6v2H0z" /></Icon></button>
                    <Zoom aria-label="Zoom" min="0" max="100" value={zoom} onChange={e => setZoom(e.target.value)} />
                    <button aria-label="Zoom in"><Icon w={6} h={6} stroke="#fff" sw={2}><path d="M0 3h6M3 0v6" /></Icon></button>
                    <StatusText $width={34} $pad={6}>33%</StatusText>
                    <button aria-label="Fit"><Icon w={10} h={10} stroke="#fff"><path d="M.5 .5h9v9h-9z" strokeDasharray="3 1" /><path d="M3 5h4M5 3v4" /></Icon></button>
                </StatusBar>
            </Window>
        </>
    )
}
